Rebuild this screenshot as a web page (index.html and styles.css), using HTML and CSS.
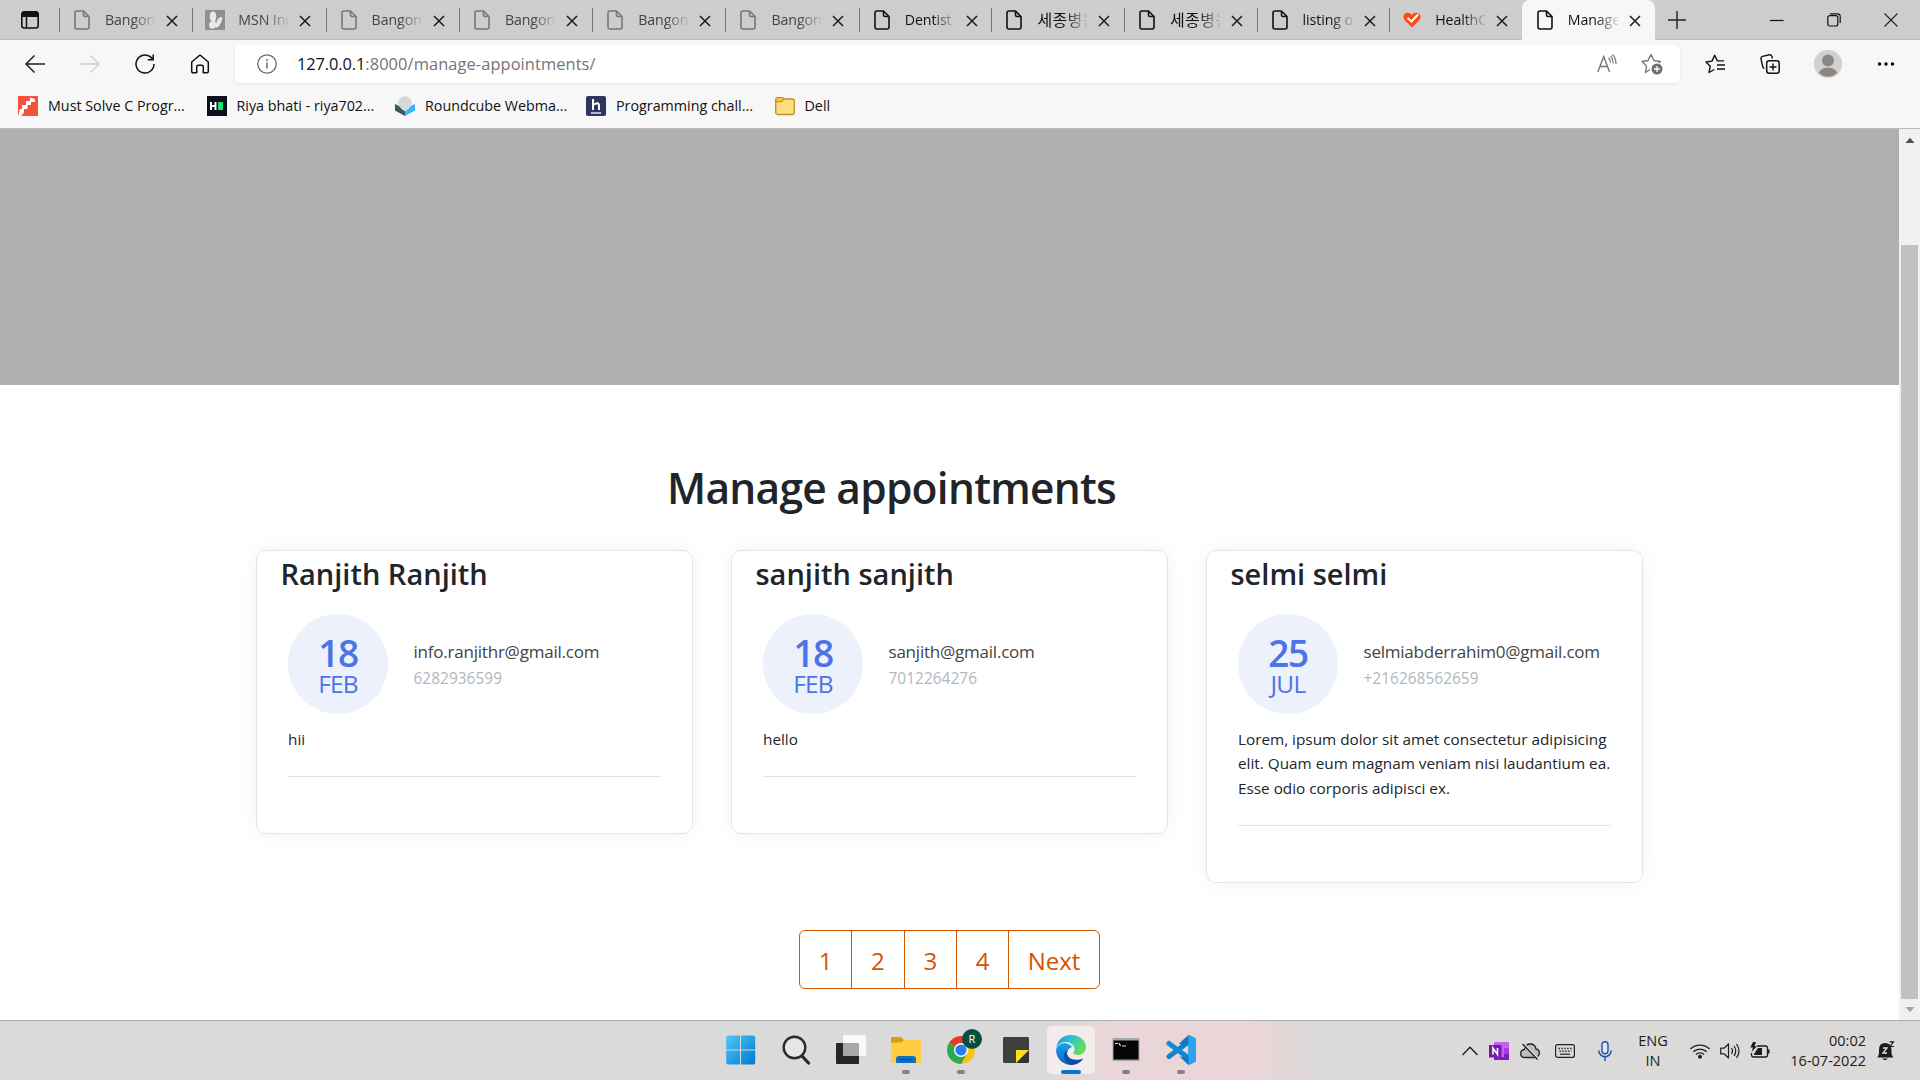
FILE: index.html
```html
<!DOCTYPE html>
<html lang="en">
<head>
<meta charset="utf-8">
<title>Manage appointments</title>
<link rel="stylesheet" href="styles.css">
</head>
<body>
<svg class="defs" aria-hidden="true">
  <symbol id="doc" viewBox="0 0 16 20"><path d="M3 1h6.500L15 6.500V17a2 2 0 0 1-2 2H3a2 2 0 0 1-2-2V3a2 2 0 0 1 2-2zM9.500 1v4a1.500 1.500 0 0 0 1.500 1.500h4" fill="none" stroke="currentColor" stroke-width="1.6" stroke-linejoin="round"/></symbol>
  <symbol id="x" viewBox="0 0 12 12"><path d="M1 1l10 10M11 1L1 11" stroke="#1c1c1c" stroke-width="1.5"/></symbol>
</svg>

<header class="browser">
  <div class="tabstrip">
    <div class="tab-actions"><svg width="20" height="20" viewBox="0 0 20 20"><rect x="1.800" y="2" width="16.400" height="16" rx="2.500" fill="none" stroke="#111" stroke-width="1.600"/><path d="M1.500 7V4a3 3 0 0 1 3-3h11a3 3 0 0 1 3 3v3z" fill="#111"/><path d="M6.500 6v12" stroke="#111" stroke-width="1.500"/></svg></div>
    <div class="tab asleep"><svg class="fav"><use href="#doc"/></svg><span class="tab-title">Bangon</span><svg class="close"><use href="#x"/></svg></div>
    <div class="tab asleep"><svg class="fav wide" viewBox="0 0 20 20"><path d="M0 0h20v20H0z" fill="#8f8f8f"/><ellipse cx="8" cy="6.500" rx="3.300" ry="5.200" fill="#e8e8e8"/><ellipse cx="7.500" cy="15" rx="3.500" ry="3.800" fill="#e8e8e8"/><path d="M8 8l3 5-1 5-3-4z" fill="#e8e8e8"/><path d="M11 17.500C10.500 13 12.500 7.500 16 7c2.500.5 1 4-.5 6.500-1 2-2.500 4.500-4.500 4z" fill="#e8e8e8"/></svg><span class="tab-title">MSN Ind</span><svg class="close"><use href="#x"/></svg></div>
    <div class="tab asleep"><svg class="fav"><use href="#doc"/></svg><span class="tab-title">Bangon</span><svg class="close"><use href="#x"/></svg></div>
    <div class="tab asleep"><svg class="fav"><use href="#doc"/></svg><span class="tab-title">Bangon</span><svg class="close"><use href="#x"/></svg></div>
    <div class="tab asleep"><svg class="fav"><use href="#doc"/></svg><span class="tab-title">Bangon</span><svg class="close"><use href="#x"/></svg></div>
    <div class="tab asleep"><svg class="fav"><use href="#doc"/></svg><span class="tab-title">Bangon</span><svg class="close"><use href="#x"/></svg></div>
    <div class="tab"><svg class="fav"><use href="#doc"/></svg><span class="tab-title">Dentist</span><svg class="close"><use href="#x"/></svg></div>
    <div class="tab"><svg class="fav"><use href="#doc"/></svg><span class="tab-title korean">세종병원</span><svg class="close"><use href="#x"/></svg></div>
    <div class="tab"><svg class="fav"><use href="#doc"/></svg><span class="tab-title korean">세종병원</span><svg class="close"><use href="#x"/></svg></div>
    <div class="tab"><svg class="fav"><use href="#doc"/></svg><span class="tab-title">listing o</span><svg class="close"><use href="#x"/></svg></div>
    <div class="tab"><svg class="fav heart" viewBox="0 0 18 16"><path d="M9 15.500L1.500 8C-1 4.500 1.500.5 5 .8 7 .8 8 2 9 3c1-1.500 3-2.500 5-2 3.500.5 4.500 4 2.500 7z" fill="#ff4a12"/><path d="M4.500 6L8.500 9.500 15 2.500" fill="none" stroke="#fff" stroke-width="2.200"/></svg><span class="tab-title">HealthCa</span><svg class="close"><use href="#x"/></svg></div>
    <div class="tab active"><svg class="fav"><use href="#doc"/></svg><span class="tab-title">Manage</span><svg class="close"><use href="#x"/></svg></div>
    <svg class="new-tab" width="18" height="18" viewBox="0 0 18 18"><path d="M9 0v18M0 9h18" stroke="#222" stroke-width="1.400"/></svg>
    <div class="window-controls">
      <svg width="14" height="14" viewBox="0 0 14 14"><path d="M0 7.500h13.500" stroke="#111" stroke-width="1.200"/></svg>
      <svg width="14" height="14" viewBox="0 0 14 14"><rect x=".8" y="2.600" width="10" height="10.400" rx="2" fill="none" stroke="#111" stroke-width="1.200"/><path d="M3 .8h7.500A2.700 2.700 0 0 1 13.200 3.500V10" fill="none" stroke="#111" stroke-width="1.200"/></svg>
      <svg width="14" height="14" viewBox="0 0 14 14"><path d="M.5.500l13 13M13.500.5l-13 13" stroke="#222" stroke-width="1.100"/></svg>
    </div>
  </div>

  <div class="toolbar">
    <nav class="nav-buttons">
      <svg width="20" height="20" viewBox="0 0 20 20"><path d="M20 10H1M9.500 1.500L1 10l8.500 8.500" fill="none" stroke="#222" stroke-width="1.500"/></svg>
      <svg width="20" height="20" viewBox="0 0 20 20"><path d="M0 10h19M10.500 1.500L19 10l-8.500 8.500" fill="none" stroke="#cfcfcf" stroke-width="1.500"/></svg>
      <svg width="20" height="20" viewBox="0 0 20 20"><path d="M19 10a9 9 0 1 1-3.500-7.100L18 5.500M18.200.5v5.300h-5.400" fill="none" stroke="#111" stroke-width="1.500"/></svg>
      <svg width="20" height="20" viewBox="0 0 20 20"><path d="M1.700 8L10 1l8.300 7v9.500a1.200 1.200 0 0 1-1.200 1.200h-3.800v-6a1.500 1.500 0 0 0-1.500-1.500H8.200a1.500 1.500 0 0 0-1.500 1.500v6H2.900a1.200 1.200 0 0 1-1.200-1.200z" fill="none" stroke="#111" stroke-width="1.500" stroke-linejoin="round"/></svg>
    </nav>
    <div class="address">
      <svg width="20" height="20" viewBox="0 0 20 20"><circle cx="10" cy="10" r="9.200" fill="none" stroke="#6b6b6b" stroke-width="1.300"/><path d="M10 8.500v6" stroke="#6b6b6b" stroke-width="1.500"/><circle cx="10" cy="6" r="1" fill="#6b6b6b"/></svg>
      <span class="url"><span class="host">127.0.0.1</span>:8000/manage-appointments/</span>
      <svg width="20" height="20" viewBox="0 0 20 20"><path d="M.8 18L6.700 2.500 12.600 18M3 12.500h7.500" fill="none" stroke="#777" stroke-width="1.400"/><path d="M11.500 4q2 2 2 5M13.500 2q2.700 3 2.700 7.500M15.500.5Q19 4 19 10" fill="none" stroke="#777" stroke-width="1.200"/></svg>
      <svg class="add-fav" width="22" height="22" viewBox="0 0 22 22"><path d="M9 16.500L4.500 19.500l1-6.500L1 8.500l6-1L10 1.500l3 6 6.500 1L17.500 10" fill="none" stroke="#777" stroke-width="1.400" stroke-linejoin="round"/><circle cx="16" cy="16" r="5.500" fill="#6f6f6f"/><path d="M16 13v6M13 16h6" stroke="#fff" stroke-width="1.300"/></svg>
    </div>
    <div class="tools">
      <svg width="20" height="20" viewBox="0 0 20 20"><path d="M9.500 15.500l-5.500 3 1.200-6.200L1 8l6-.9L9.700 1.200l2.700 5.700h6.600M12 11h8M12 15h8" fill="none" stroke="#111" stroke-width="1.400" stroke-linejoin="round"/></svg>
      <svg width="20" height="20" viewBox="0 0 20 20"><rect x="6.700" y="6.700" width="12.500" height="12.500" rx="2.500" fill="none" stroke="#111" stroke-width="1.500"/><path d="M13 9.500v7M9.500 13h7M4.500 14.500L3 13.500 1 5Q.7 3 2.500 2.300L9.500.8q1.800-.2 2.500 1.700l.5 2" fill="none" stroke="#111" stroke-width="1.400"/></svg>
      <svg class="avatar" width="28" height="28" viewBox="0 0 28 28"><circle cx="14" cy="14" r="14" fill="#d2d0ce"/><circle cx="14" cy="10.500" r="6" fill="#8a8683"/><path d="M5 23c1-7 17-7 18 0a13 13 0 0 1-18 0z" fill="#8a8683"/></svg>
      <svg width="18" height="6" viewBox="0 0 18 6"><circle cx="2.500" cy="3" r="1.700"/><circle cx="9" cy="3" r="1.700"/><circle cx="15.500" cy="3" r="1.700"/></svg>
    </div>
  </div>

  <div class="bookmarks">
    <a><svg width="20" height="20" viewBox="0 0 20 20"><path d="M0 0h20v20H0z" fill="#f4523b"/><path d="M17 3v3h-4v3H9.500v4H6v3.500L3 20H0l1.500-4.500V13H4V9h4V5h4V1.500z" fill="#fff"/></svg><span>Must Solve C Progr...</span></a>
    <a><svg width="20" height="20" viewBox="0 0 20 20"><path d="M0 0h20v20H0z" fill="#0c111c"/><path d="M4 6v8M8.500 6v8M4 10h4.500" stroke="#fff" stroke-width="2"/><path d="M11 6h5v8h-5z" fill="#1ee06c"/></svg><span>Riya bhati - riya702...</span></a>
    <a><svg width="20" height="20" viewBox="0 0 20 20"><path d="M0 8l10 5v7L0 14.500z" fill="#3e5562"/><path d="M20 8l-10 5v7l10-5.500z" fill="#35b5f5"/><path d="M3 7a7 6.800 0 0 1 14 0q0 4-7 8.500Q3 11 3 7z" fill="#d5d9dc"/></svg><span>Roundcube Webma...</span></a>
    <a><svg width="20" height="20" viewBox="0 0 20 20"><rect width="20" height="20" rx="2" fill="#2d3560"/><path d="M7 3v11M7 9q6-4 6 1v4" fill="none" stroke="#fff" stroke-width="2"/><path d="M5 17h10" stroke="#fff" stroke-width="1.300"/></svg><span>Programming chall...</span></a>
    <a><svg width="20" height="20" viewBox="0 0 20 20"><rect x=".7" y="3" width="18.600" height="15.500" rx="2" fill="#ffdc7c" stroke="#b8922a" stroke-width="1.300"/><path d="M.8 6V3q0-1.500 1.500-1.500H7q1.500 0 1.500 1.500L7 5.500z" fill="#fbc92f" stroke="#b8922a" stroke-width="1.200"/></svg><span>Dell</span></a>
  </div>
</header>

<div class="viewport">
  <main class="page">
    <div class="hero"></div>
    <h1>Manage appointments</h1>
    <section class="cards">
      <article class="card">
        <h4>Ranjith Ranjith</h4>
        <div class="card-body">
          <div class="who"><div class="date"><b>18</b><span>FEB</span></div><div class="contact"><span class="email">info.ranjithr@gmail.com</span><span class="phone">6282936599</span></div></div>
          <p>hii</p>
        </div>
      </article>
      <article class="card">
        <h4>sanjith sanjith</h4>
        <div class="card-body">
          <div class="who"><div class="date"><b>18</b><span>FEB</span></div><div class="contact"><span class="email">sanjith@gmail.com</span><span class="phone">7012264276</span></div></div>
          <p>hello</p>
        </div>
      </article>
      <article class="card">
        <h4>selmi selmi</h4>
        <div class="card-body">
          <div class="who"><div class="date"><b>25</b><span>JUL</span></div><div class="contact"><span class="email">selmiabderrahim0@gmail.com</span><span class="phone">+216268562659</span></div></div>
          <p>Lorem, ipsum dolor sit amet consectetur adipisicing<br>elit. Quam eum magnam veniam nisi laudantium ea.<br>Esse odio corporis adipisci ex.</p>
        </div>
      </article>
    </section>
    <nav class="pager"><a>1</a><a>2</a><a>3</a><a>4</a><a class="next">Next</a></nav>
  </main>
  <div class="scrollbar">
    <svg width="12" height="7" viewBox="0 0 12 7"><path d="M1.500 6L6 .8 10.500 6z" fill="#505050"/></svg>
    <div class="thumb"></div>
    <svg width="12" height="7" viewBox="0 0 12 7"><path d="M1.500 1L6 6.200 10.500 1z" fill="#a3a3a3"/></svg>
  </div>
</div>

<footer class="taskbar">
  <div class="apps">
    <div class="app"><svg width="30" height="30" viewBox="0 0 30 30"><defs><linearGradient id="win" x1="0" y1="0" x2="1" y2="1"><stop offset="0" stop-color="#4cc8f8"/><stop offset="1" stop-color="#0078d4"/></linearGradient></defs><path d="M1.500.5H14v14H.2V2zM15 .5h13L29.200 2v12.500H15zM.2 15.500H14v14H1.500L.2 28zM15 15.500h14.200V28L28 29.500H15z" fill="url(#win)"/></svg></div>
    <div class="app"><svg width="30" height="30" viewBox="0 0 30 30"><circle cx="13.500" cy="12.500" r="10.800" fill="#e6e6e6" stroke="#2b2b2b" stroke-width="2.400"/><path d="M21 21l6.500 7" stroke="#2b2b2b" stroke-width="3.200" stroke-linecap="round"/></svg></div>
    <div class="app"><svg width="30" height="30" viewBox="0 0 30 30"><rect x="0" y="8" width="23" height="21" rx="1" fill="#262626"/><rect x="7" y="0" width="23" height="21" rx="1" fill="#fff" opacity=".82"/><path d="M7 8h16v13H7z" fill="#a8a8a8"/></svg></div>
    <div class="app running"><svg width="30" height="30" viewBox="0 0 30 30"><path d="M0 3q0-1 1-1h9l3 3h10v5H0z" fill="#d99e0c"/><path d="M0 7.500h10.500L13 5h16q1 0 1 1v21q0 1-1 1H1q-1 0-1-1z" fill="#ffcd42"/><path d="M5 28v-4q0-3 3-3h14q3 0 3 3v4z" fill="#0f70c0"/><path d="M8.500 24.500h13" stroke="#084a86" stroke-width="1.200"/></svg></div>
    <div class="app running chrome"><svg width="30" height="30" viewBox="0 0 30 30"><circle cx="15" cy="15" r="14" fill="#fbc116"/><path d="M15 15L2.900 8A14 14 0 0 1 27.100 8z" fill="#e33b2e"/><path d="M15 15L2.900 8A14 14 0 0 0 15 29l6-10.500z" fill="#2da94f"/><circle cx="15" cy="15" r="7" fill="#fff"/><circle cx="15" cy="15" r="5.600" fill="#2d7de8"/></svg><span class="badge">R</span></div>
    <div class="app"><svg width="30" height="30" viewBox="0 0 30 30"><path d="M3.500 2h23Q28 2 28 3.500V15H15v13H3.500Q2 28 2 26.500v-23Q2 2 3.500 2z" fill="#3f3f3f"/><path d="M15 28V15h13z" fill="#ffdf12"/><path d="M15 28l13-13v11.500q0 1.500-1.500 1.500z" fill="#333"/></svg></div>
    <div class="app running current"><svg width="30" height="30" viewBox="0 0 30 30"><defs><linearGradient id="ea" x1="0" y1="0" x2="1" y2=".4"><stop offset="0" stop-color="#1c8fdc"/><stop offset=".5" stop-color="#2cc3d4"/><stop offset="1" stop-color="#66df55"/></linearGradient><linearGradient id="eb" x1="0" y1="0" x2="0" y2="1"><stop offset="0" stop-color="#1fa0e8"/><stop offset="1" stop-color="#0668c4"/></linearGradient></defs><path d="M0 14C1 5 7 0 15 0c9 0 15 6 15 12 0 5-4 8-8 8-3 0-5-1-5-2 0-.7 1.500-1.500 1.500-4 0-4-4-7-9-7C4.500 7 1 10 0 14z" fill="url(#ea)"/><path d="M0 15a15 15 0 0 0 17 14.800L11 19q0-5 5-6.500C14 8 3 5 0 15z" fill="url(#eb)"/><path d="M11 15c-2 8 6 12 16.500 8.500C24 28 20 30 15 30c-5-2-7.500-6-7-10 .3-2.500 1.500-4 3-5z" fill="#0b4f9e"/><path d="M18.500 14.500c-.2 2-1.500 2.700-1.500 3.500 0 .9 2 2 4.500 2.200-3.500 1.300-8.500-.5-9.300-3.700-.5-3 4.300-6 6.300-2z" fill="#f3ebec"/></svg></div>
    <div class="app running"><svg width="30" height="30" viewBox="0 0 30 30"><path d="M1.500 3h27v23h-27z" fill="#a3a7ae"/><path d="M2.500 5.500h25v19h-25z" fill="#050505"/><path d="M4 8.500h3M8 8l1.500 3M11 11h4" stroke="#ddd" stroke-width="1.200"/></svg></div>
    <div class="app running"><svg width="30" height="30" viewBox="0 0 30 30"><path d="M22.500 7L3 21.500" stroke="#1680c8" stroke-width="5" stroke-linecap="round"/><path d="M22.500 23L3 8.500" stroke="#0c8bd8" stroke-width="5" stroke-linecap="round"/><path d="M22.500 0l6 2.700q1.500.7 1.500 2.300v20q0 1.600-1.500 2.300l-6 2.700-9-8.500L22.500 22V8l-4.500 3.500-5-3z" fill="#1478be"/><path d="M22.500 0l6 2.700q1.500.7 1.500 2.300v20q0 1.600-1.500 2.300l-6 2.700z" fill="#29a3f2"/></svg></div>
  </div>
  <div class="tray">
    <svg class="t-up" width="16" height="10" viewBox="0 0 16 10"><path d="M.5 9L8 1.200 15.500 9" fill="none" stroke="#1c1c1c" stroke-width="1.300"/></svg>
    <svg class="t-note" width="20" height="18" viewBox="0 0 20 18"><path d="M5 0h15v18H5z" fill="#c55ff0"/><path d="M15 6h5v6h-5z" fill="#a23be0"/><path d="M5 15h10v-3h5v6H5z" fill="#7a1fb8"/><rect y="3" width="12.500" height="12.500" fill="#7719aa"/><path d="M4 12.500V6l4.500 6.500V6" fill="none" stroke="#fff" stroke-width="1.600"/></svg>
    <svg class="t-cloud" width="20" height="18" viewBox="0 0 20 18"><path d="M5 15.500q-4.300 0-4.300-4Q.7 8 4.500 7.500 5.500 2 10.500 2q4.500 0 5.500 5 3.300.5 3.300 4t-4 4.500z" fill="#bdbdbd" stroke="#222" stroke-width="1.300"/><path d="M3 1.500L18 17" stroke="#dadada" stroke-width="3"/><path d="M2.500 2L17.500 17.500" stroke="#222" stroke-width="1.400"/></svg>
    <svg class="t-key" width="20" height="14" viewBox="0 0 20 14"><rect x=".6" y=".6" width="18.800" height="12.800" rx="2" fill="none" stroke="#222" stroke-width="1.200"/><path d="M3.500 4.500h13M4.500 7.200h12" stroke="#222" stroke-width="1.400" stroke-dasharray="1.400 1.500"/><path d="M5 10.200h10" stroke="#222" stroke-width="1.200"/></svg>
    <svg class="t-mic" width="14" height="20" viewBox="0 0 14 20"><rect x="4" y=".7" width="6" height="12" rx="3" fill="#dfe7f2" stroke="#1b57a8" stroke-width="1.400"/><path d="M.8 9.500a6.200 6.200 0 0 0 12.400 0M7 16v4" fill="none" stroke="#1b57a8" stroke-width="1.500"/></svg>
    <div class="lang"><span>ENG</span><span>IN</span></div>
    <svg class="t-wifi" width="20" height="16" viewBox="0 0 20 16"><path d="M.5 6a13.500 13.500 0 0 1 19 0M3.300 8.800a9.500 9.500 0 0 1 13.400 0M6 11.500a5.700 5.700 0 0 1 8 0" fill="none" stroke="#1c1c1c" stroke-width="1.300"/><circle cx="10" cy="13.700" r="2" fill="#1c1c1c"/></svg>
    <svg class="t-vol" width="20" height="18" viewBox="0 0 20 18"><path d="M.7 6.200H4L8.500 2v14L4 11.800H.7zM11.500 6q2 3 0 6M14 4q3.500 5 0 10M16.500 2q5 7 0 14" fill="none" stroke="#1c1c1c" stroke-width="1.200" stroke-linejoin="round"/></svg>
    <svg class="t-bat" width="20" height="18" viewBox="0 0 20 18"><path d="M7 4h8.500q2 0 2 2v7q0 2-2 2h-12q-2 0-2-2v-2" fill="none" stroke="#1c1c1c" stroke-width="1.300"/><path d="M18 7.500h1.500v4H18zM4 12l4-6h4v7H4z" fill="#1c1c1c"/><path d="M3 0L.3 5.500H3L1.500 10 7 4.200H4.500L6 0z" fill="#1c1c1c"/></svg>
    <div class="clock"><span>00:02</span><span>16-07-2022</span></div>
    <svg class="t-bell" width="18" height="20" viewBox="0 0 18 20"><path d="M2 13V9q0-7 6-7 6.500 0 6.500 7v4l1.800 3.500H.3zM5 17.500h6q-3 3-6 0z" fill="#1c1c1c"/><path d="M6 7h4l-4 5h4" fill="none" stroke="#ddd" stroke-width="1.300"/><path d="M12.500.8h4L13 5.500h4" fill="none" stroke="#1c1c1c" stroke-width="1.200"/></svg>
  </div>
</footer>
</body>
</html>
```
FILE: styles.css
```css
* { box-sizing: border-box; }
body {
  margin: 0;
  width: 1920px;
  height: 1080px;
  overflow: hidden;
  display: flex;
  flex-direction: column;
  background: #fff;
  color: #212529;
  font-family: "Open Sans", "Noto Sans CJK KR", sans-serif;
}
svg { display: block; flex: none; }
.defs { position: absolute; width: 0; height: 0; }

/* browser chrome */
.browser { height: 129px; background: #f7f7f7; border-bottom: 1px solid #b8b8b8; }
.tabstrip { height: 40px; display: flex; align-items: center; background: #cdcdcd; box-shadow: inset 0 -1px #bcbcbc; }
.tab-actions { width: 59px; padding-left: 20px; }
.tab {
  width: 132.6px;
  height: 40px;
  display: flex;
  align-items: center;
  padding-left: 15px;
  color: #111;
  background: linear-gradient(#777, #777) 0 8px / 1px 24px no-repeat;
}
.tab.asleep { width: 133.3px; color: #777; }
.tab.active { width: 133px; background: #f7f7f7; border-radius: 8px 8px 0 0; }
.tab.active + .new-tab { margin-left: 13px; }
.fav { width: 16px; height: 20px; margin-right: 15px; }
.fav.wide { width: 20px; margin: 0 13px 0 -2px; }
.fav.heart { width: 18px; height: 16px; margin: 0 14px 0 -1px; }
.tab-title {
  width: 50px;
  height: 24px;
  overflow: hidden;
  white-space: nowrap;
  font-size: 14.2px;
  line-height: 23px;
  letter-spacing: -.1px;
  -webkit-mask: linear-gradient(90deg, #000 55%, transparent 105%);
  mask: linear-gradient(90deg, #000 55%, transparent 105%);
}
.tab-title.korean { font: 400 16px/22px "Noto Sans CJK KR", sans-serif; letter-spacing: .4px; }
.asleep .tab-title { color: #444; }
.close { width: 12px; height: 12px; margin: 1px 0 0 11px; }
.window-controls { display: flex; gap: 43px; margin-left: auto; padding-right: 22px; }

.toolbar { height: 48px; display: flex; align-items: center; }
.nav-buttons { width: 235px; display: flex; gap: 35px; padding-left: 25px; }
.address {
  width: 1445px;
  height: 38px;
  display: flex;
  align-items: center;
  padding: 0 17px 0 22px;
  border-radius: 5px;
  background: #fff;
  box-shadow: 0 1px 3px rgba(0, 0, 0, .08);
}
.url { margin: 0 auto 0 20px; font-size: 16.4px; line-height: 24px; letter-spacing: .1px; color: #757575; }
.host { color: #111; letter-spacing: -.1px; }
.add-fav { margin-left: 24px; }
.tools { display: flex; align-items: center; gap: 34.500px; padding-left: 25px; }

.bookmarks { display: flex; padding: 8px 0 0 18px; font-size: 14.3px; line-height: 20px; color: #111; }
.bookmarks a { display: flex; gap: 10px; width: 188.5px; white-space: nowrap; }
.bookmarks a:nth-child(3) { width: 191px; }

/* page */
.viewport { height: 891px; display: flex; }
.page { width: 1899px; background: #fff; }
.hero { height: 256px; background: #b0b0b0; }
h1 { margin: 76px 0 35px; padding-left: 667px; font-size: 42.5px; line-height: 54px; font-weight: 560; letter-spacing: -.75px; }
.cards { display: grid; grid-template-columns: repeat(3, 437px); gap: 38px; align-items: start; padding-left: 256px; }
.card { border: 1px solid #e3e5ea; border-radius: 10px; box-shadow: 0 0 18px rgba(40, 50, 90, .06); padding: 5px 31px 56px; }
h4 { margin: 0 0 22px -7.500px; font-size: 29px; line-height: 36px; font-weight: 580; }
.who { display: flex; gap: 25.5px; height: 100px; }
.date {
  width: 100px;
  height: 100px;
  border-radius: 50%;
  background: #ecf1fc;
  color: #4b74e6;
  display: flex;
  flex-direction: column;
  align-items: center;
  padding-top: 21px;
}
.date b { font-size: 37px; line-height: 36px; font-weight: 600; letter-spacing: -1.500px; }
.date span { font-size: 24.5px; line-height: 26px; letter-spacing: -.8px; }
.contact { display: flex; flex-direction: column; padding-top: 24px; }
.email { font-size: 17px; line-height: 28px; letter-spacing: -.22px; color: #444; }
.phone { font-size: 15.4px; line-height: 26px; letter-spacing: .05px; color: #b1b8c0; }
.card p { margin: 13px 0 0; padding-bottom: 24.4px; border-bottom: 1px solid #e2e4e6; font-size: 15.3px; line-height: 24.4px; white-space: nowrap; }

.pager { display: flex; width: 301px; height: 59px; margin: 47px 0 0 799px; border: 1px solid #d35400; border-radius: 6px; color: #d35400; font-size: 24px; line-height: 60px; }
.pager a { width: 52.3px; text-align: center; border-right: 1px solid #d35400; }
.pager .next { width: auto; flex: 1; border: 0; }

.scrollbar { width: 21px; background: #f1f1f1; display: flex; flex-direction: column; align-items: center; padding: 8px 0 7px; }
.scrollbar .thumb { width: 17px; height: 755px; margin: 101px 0 7px; background: #c1c1c1; }

/* taskbar */
.taskbar {
  height: 60px;
  display: flex;
  border-top: 1px solid #aeaeae;
  background: linear-gradient(90deg, #dadada 0 1040px, #ead5d8 1110px 1250px, #dcdad9 1320px);
}
.apps { display: flex; gap: 7px; padding: 5px 0 0 717px; }
.app { width: 48px; height: 48px; padding: 9px; border-radius: 5px; display: flex; flex-direction: column; align-items: center; position: relative; }
.running::after { content: ""; width: 8px; height: 4px; margin-top: 5px; flex: none; border-radius: 2px; background: #858082; }
.current { background: #f3ebec; }
.current::after { width: 20px; background: #0a74d4; }
.badge { position: absolute; left: 25px; top: 3px; width: 20px; height: 20px; border-radius: 50%; background: #064f44; color: #fff; font-size: 11px; line-height: 20px; text-align: center; }
.tray { display: flex; align-items: center; margin-left: auto; padding-right: 25px; font-size: 14.5px; line-height: 20px; color: #1c1c1c; }
.t-note, .t-cloud { margin-left: 11px; }
.t-key { margin-left: 15px; }
.t-mic { margin-left: 23px; }
.lang { display: flex; flex-direction: column; width: 32px; margin-left: 25px; text-align: center; }
.t-wifi { margin-left: 21px; }
.t-vol, .t-bat { margin-left: 10px; }
.clock { display: flex; flex-direction: column; width: 86px; margin-left: 10px; text-align: right; white-space: nowrap; }
.t-bell { margin-left: 11px; }
```
